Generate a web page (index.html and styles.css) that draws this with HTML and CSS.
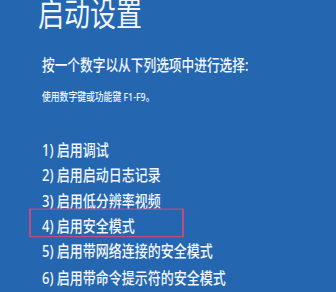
FILE: index.html
```html
<!DOCTYPE html>
<html lang="zh-CN">
<head>
<meta charset="utf-8">
<link rel="stylesheet" href="styles.css">
</head>
<body>
<div class="screen">
  <h1 class="title">启动设置</h1>
  <p class="prompt">按一个数字以从下列选项中进行选择:</p>
  <p class="hint">使用数字键或功能键 F1-F9。</p>
  <ol class="options">
    <li>1) 启用调试</li>
    <li>2) 启用启动日志记录</li>
    <li>3) 启用低分辨率视频</li>
    <li class="marked">4) 启用安全模式</li>
    <li>5) 启用带网络连接的安全模式</li>
    <li>6) 启用带命令提示符的安全模式</li>
  </ol>
</div>
</body>
</html>
```

FILE: styles.css
```css
html, body {
  margin: 0;
  padding: 0;
  background: #2466b0;
  overflow: hidden;
  width: 336px;
  height: 292px;
}

.screen {
  transform: scaleY(1.25);
  transform-origin: 0 0;
  padding-left: 42px;
  color: #f2f6fc;
  font-family: "Noto Sans", "Noto Sans CJK SC", sans-serif;
}

.title {
  margin: -4px 0 0 -4px;
  font-size: 26px;
  line-height: 26px;
  font-weight: 400;
  font-family: "Noto Sans CJK SC", sans-serif;
}

.prompt {
  margin: 22.6px 0 0 0;
  font-size: 12.7px;
  line-height: 12.7px;
  font-weight: 500;
}

.hint {
  margin: 16.2px 0 0 0;
  font-size: 8.8px;
  line-height: 8.8px;
  font-weight: 500;
}

.options {
  list-style: none;
  margin: 26.8px 0 0 0;
  padding: 0;
  font-size: 13px;
  line-height: 20.3px;
  font-weight: 500;
}

.options li {
  position: relative;
  white-space: nowrap;
}

.marked::after {
  content: "";
  position: absolute;
  left: -13px;
  top: -3.6px;
  width: 151px;
  height: 20.8px;
  border-style: solid;
  border-color: #c04b7e;
  border-width: 1.6px 2px;
}
```
